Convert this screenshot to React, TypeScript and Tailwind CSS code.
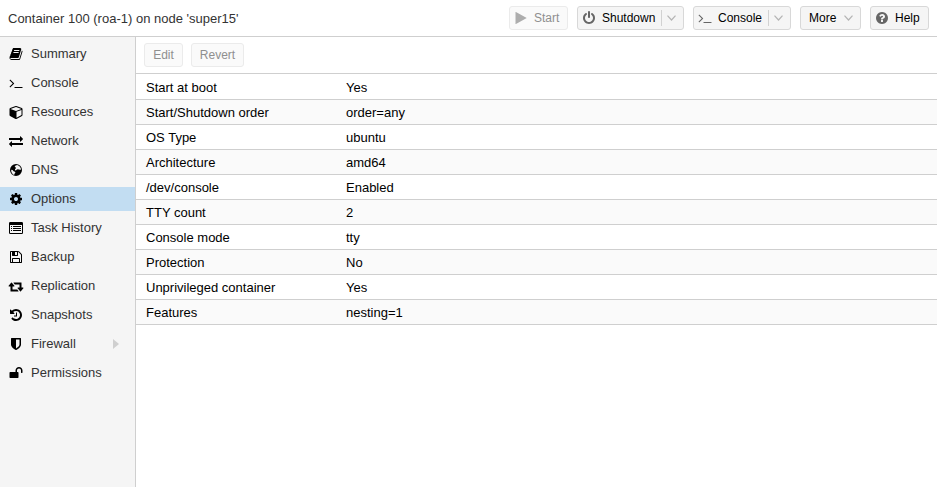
import React from "react";

const paths = {
  book: "M1703 478q40 57 18 129l-275 906q-19 64-76.5 107.5t-122.5 43.5h-923q-77 0-148.5-53.5t-99.5-131.5q-24-67-2-127 0-4 3-27t4-37q1-8-3-21.5t-3-19.5q2-11 8-21t16.5-23.5 16.5-23.5q23-38 45-91.5t30-91.5q3-10 .5-30t-.5-28q3-11 17-28t17-23q21-36 42-92t25-90q1-9-2.5-32t.5-28q4-13 22-30.5t22-22.5q19-26 42.5-84.5t27.5-96.5q1-8-3-25.5t-2-26.5q2-8 9-18t18-23 17-21q8-12 16.5-30.5t15-35 16-36 19.5-32 26.5-23.5 36-11.5 47.5 5.5l-1 3q38-9 51-9h761q74 0 114 56t18 130l-274 906q-36 119-71.5 153.5t-128.5 34.5h-869q-27 0-38 15-11 16-1 43 24 70 144 70h923q29 0 56-15.5t35-41.5l300-987q7-22 5-57 38 15 59 43zm-1064 2q-4 13 2 22.5t20 9.5h608q13 0 25.5-9.5t16.5-22.5l21-64q4-13-2-22.5t-20-9.5h-608q-13 0-25.5 9.5t-16.5 22.5zm-83 256q-4 13 2 22.5t20 9.5h608q13 0 25.5-9.5t16.5-22.5l21-64q4-13-2-22.5t-20-9.5h-608q-13 0-25.5 9.5t-16.5 22.5z",
  terminal: "M649 983l-466 466q-10 10-23 10t-23-10l-50-50q-10-10-10-23t10-23l393-393-393-393q-10-10-10-23t10-23l50-50q10-10 23-10t23 10l466 466q10 10 10 23t-10 23zm1079 457v64q0 14-9 23t-23 9h-960q-14 0-23-9t-9-23v-64q0-14 9-23t23-9h960q14 0 23 9t9 23z",
  cube: "M896 1629l640-349v-636l-640 233v752zm-64-865l698-254-698-254-698 254zm832-252v768q0 35-18 65t-49 47l-704 384q-28 16-61 16t-61-16l-704-384q-31-17-49-47t-18-65v-768q0-40 23-73t61-47l704-256q22-8 44-8t44 8l704 256q38 14 61 47t23 73z",
  exchange: "M1792 1184v192q0 13-9.5 22.5t-22.5 9.5h-1376v192q0 13-9.5 22.5t-22.5 9.5q-12 0-24-10l-319-320q-9-9-9-22 0-14 9-23l320-320q9-9 23-9 13 0 22.5 9.5t9.5 22.5v192h1376q13 0 22.5 9.5t9.5 22.5zm0-544q0 14-9 23l-320 320q-9 9-23 9-13 0-22.5-9.5t-9.5-22.5v-192h-1376q-13 0-22.5-9.5t-9.5-22.5v-192q0-13 9.5-22.5t22.5-9.5h1376v-192q0-14 9-23t23-9q12 0 24 10l319 319q9 9 9 23z",
  globe: "M896 128a768 768 0 1 0 0 1536a768 768 0 1 0 0-1536zM850 330l200-70 260 130 190 250 30 260-120-80-110 40-130-70-160 50-130 130-90-50-30-130 130-110-70-160-110-70zM290 850l170 60 120 130 180 70 60 130-120 120-40 180-130-60-160-200-90-220z",
  cog: "M1152 896q0-106-75-181t-181-75-181 75-75 181 75 181 181 75 181-75 75-181zm512-109v222q0 12-8 23t-20 13l-185 28q-19 54-39 91 35 50 107 138 10 12 10 25t-9 23q-27 37-99 108t-94 71q-12 0-26-9l-138-108q-44 23-91 38-16 136-29 186-7 28-36 28h-222q-14 0-24.5-8.5t-11.5-21.5l-28-184q-49-16-90-37l-141 107q-10 9-25 9-14 0-25-11-126-114-165-168-7-10-7-23 0-12 8-23 15-21 51-66.5t54-70.5q-27-50-41-99l-183-27q-13-2-21-12.5t-8-23.5v-222q0-12 8-23t19-13l186-28q14-46 39-92-40-57-107-138-10-12-10-24 0-10 9-23 26-36 98.5-107.5t94.5-71.5q13 0 26 10l138 107q44-23 91-38 16-136 29-186 7-28 36-28h222q14 0 24.5 8.5t11.5 21.5l28 184q49 16 90 37l142-107q9-9 24-9 13 0 25 10 129 119 165 170 7 8 7 22 0 12-8 23-15 21-51 66.5t-54 70.5q26 50 41 98l183 28q13 2 21 12.5t8 23.5z",
  list: "M160 128h1472q160 0 160 160v1216q0 160-160 160h-1472q-160 0-160-160v-1216q0-160 160-160zM128 512v992q0 32 32 32h1472q32 0 32-32v-992zM256 640h128v128h-128zM512 640h1024v128h-1024zM256 896h128v128h-128zM512 896h1024v128h-1024zM256 1152h128v128h-128zM512 1152h1024v128h-1024z",
  floppy: "M512 1536h768v-384h-768v384zm896 0h128v-896q0-14-10-38.5t-20-34.5l-281-281q-10-10-34-20t-39-10v416q0 40-28 68t-68 28h-576q-40 0-68-28t-28-68v-416h-128v1280h128v-416q0-40 28-68t68-28h832q40 0 68 28t28 68v416zm-384-928v-320q0-13-9.5-22.5t-22.5-9.5h-192q-13 0-22.5 9.5t-9.5 22.5v320q0 13 9.5 22.5t22.5 9.5h192q13 0 22.5-9.5t9.5-22.5zm640 32v928q0 40-28 68t-68 28h-1344q-40 0-68-28t-28-68v-1344q0-40 28-68t68-28h928q40 0 88 20t76 48l280 280q28 28 48 76t20 88z",
  retweet: "M1216 1568q0 13-9.5 22.5t-22.5 9.5h-960q-8 0-13.5-2t-9-7-5.5-8-3-11.5-1-11.5v-600h-192q-26 0-45-19t-19-45q0-24 15-41l320-384q19-22 49-22t49 22l320 384q15 17 15 41 0 26-19 45t-45 19h-192v384h576q16 0 25 11l160 192q7 10 7 21zm640-416q0 24-15 41l-320 384q-20 23-49 23t-49-23l-320-384q-15-17-15-41 0-26 19-45t45-19h192v-384h-576q-16 0-25-12l-160-192q-7-9-7-20 0-13 9.5-22.5t22.5-9.5h960q8 0 13.5 2t9 7 5.5 8 3 11.5 1 11.5v600h192q26 0 45 19t19 45z",
  history: "M1664 896q0 156-61 298t-164 245-245 164-298 61q-172 0-327-72.5t-264-204.5q-7-10-6.5-22.5t8.5-20.5l137-138q10-9 25-9 16 2 23 12 73 95 179 147t225 52q104 0 198.5-40.5t163.5-109.5 109.5-163.5 40.5-198.5-40.5-198.5-109.5-163.5-163.5-109.5-198.5-40.5q-98 0-188 35.5t-160 101.5l137 138q31 30 14 69-17 40-59 40h-448q-26 0-45-19t-19-45v-448q0-42 40-59 39-17 69 14l130 129q107-101 244.5-156.5t284.5-55.5q156 0 298 61t245 164 164 245 61 298zm-640-288v448q0 14-9 23t-23 9h-320q-14 0-23-9t-9-23v-64q0-14 9-23t23-9h224v-352q0-14 9-23t23-9h64q14 0 23 9t9 23z",
  shield: "M1344 960v-640h-448v1137q119-63 213-137 235-184 235-360zm192-768v768q0 86-33.5 170.5t-83 150-118 127.5-126.5 103-121 77.5-89.5 49.5-42.5 20q-12 6-26 6t-26-6q-16-7-42.5-20t-89.5-49.5-121-77.5-126.5-103-118-127.5-83-150-33.5-170.5v-768q0-26 19-45t45-19h1152q26 0 45 19t19 45z",
  unlock: "M1728 576v256q0 26-19 45t-45 19h-64q-26 0-45-19t-19-45v-256q0-106-75-181t-181-75-181 75-75 181v192h96q40 0 68 28t28 68v576q0 40-28 68t-68 28h-960q-40 0-68-28t-28-68v-576q0-40 28-68t68-28h672v-192q0-185 131.5-316.5t316.5-131.5 316.5 131.5 131.5 316.5z",
  power: "M1664 896q0 156-61 298t-164 245-245 164-298 61-298-61-245-164-164-245-61-298q0-182 80.5-343t226.5-270q43-32 95.5-25t83.5 50q32 42 24.5 94.5t-49.5 84.5q-98 74-151.5 181t-53.5 228q0 104 40.5 198.5t109.5 163.5 163.5 109.5 198.5 40.5 198.5-40.5 163.5-109.5 109.5-163.5 40.5-198.5q0-121-53.5-228t-151.5-181q-42-32-49.5-84.5t24.5-94.5q31-43 84-50t95 25q146 109 226.5 270t80.5 343zm-640-768v640q0 52-38 90t-90 38-90-38-38-90v-640q0-52 38-90t90-38 90 38 38 90z",
  question: "M1024 1376v-192q0-14-9-23t-23-9h-192q-14 0-23 9t-9 23v192q0 14 9 23t23 9h192q14 0 23-9t9-23zm256-672q0-88-55.5-163t-138.5-116-170-41q-243 0-371 213-15 24 8 42l132 100q7 6 19 6 16 0 25-12 53-68 86-92 34-24 86-24 48 0 85.5 26t37.5 59q0 38-20 61t-68 45q-63 28-115.5 86.5t-52.5 125.5v36q0 14 9 23t23 9h192q14 0 23-9t9-23q0-19 21.5-49.5t54.5-49.5q32-18 49-28.5t46-35 44.5-48 28-60.5 12.5-81zm384 192q0 209-103 385.5t-279.5 279.5-385.5 103-385.5-103-279.5-279.5-103-385.5 103-385.5 279.5-279.5 385.5-103 385.5 103 279.5 279.5 103 385.5z",
  play: "M1576 927l-1328 738q-23 13-39.5 3t-16.5-36v-1472q0-26 16.5-36t39.5 3l1328 738q23 13 23 31t-23 31z",
};

type IconName = keyof typeof paths;

function Icon({ name, className = "" }: { name: IconName; className?: string }) {
  return (
    <svg
      viewBox={name === "cube" ? "-64 0 1792 1792" : "0 0 1792 1792"}
      fill="currentColor"
      fillRule="evenodd"
      overflow="visible"
      className={`size-3.5 shrink-0 ${className}`}
    >
      <path d={paths[name]} />
    </svg>
  );
}

function Chevron({ className = "" }: { className?: string }) {
  return (
    <svg viewBox="0 0 9 6" fill="none" stroke="#b4b4b4" strokeWidth="1.2" className={`h-1.5 w-[9px] shrink-0 ${className}`}>
      <path d="M.5.7 4.5 5 8.5.7" />
    </svg>
  );
}

const navItems: { icon: IconName; label: string; expandable?: boolean }[] = [
  { icon: "book", label: "Summary" },
  { icon: "terminal", label: "Console" },
  { icon: "cube", label: "Resources" },
  { icon: "exchange", label: "Network" },
  { icon: "globe", label: "DNS" },
  { icon: "cog", label: "Options" },
  { icon: "list", label: "Task History" },
  { icon: "floppy", label: "Backup" },
  { icon: "retweet", label: "Replication" },
  { icon: "history", label: "Snapshots" },
  { icon: "shield", label: "Firewall", expandable: true },
  { icon: "unlock", label: "Permissions" },
];

const options = [
  ["Start at boot", "Yes"],
  ["Start/Shutdown order", "order=any"],
  ["OS Type", "ubuntu"],
  ["Architecture", "amd64"],
  ["/dev/console", "Enabled"],
  ["TTY count", "2"],
  ["Console mode", "tty"],
  ["Protection", "No"],
  ["Unprivileged container", "Yes"],
  ["Features", "nesting=1"],
];

const button = "flex h-6 shrink-0 items-center rounded-[3px] border border-[#d8d8d8] bg-[#f5f5f5] text-[12px] text-black";
const disabled = "flex h-6 shrink-0 items-center rounded-[3px] border border-[#ebebeb] bg-[#fafafa] text-[12px] text-[#8f8f8f]";

export default function App() {
  return (
    <div className="flex h-screen w-full flex-col overflow-hidden bg-white font-['Liberation_Sans',Arial,sans-serif] text-[13px] leading-4 text-black">
      <header className="flex h-[37px] shrink-0 items-center gap-[9px] border-b border-[#cfcfcf] pr-2 pl-2">
        <h1 className="mr-auto whitespace-nowrap pt-px text-[#333]">Container 100 (roa-1) on node 'super15'</h1>
        <button className={`${disabled} w-[59px] pl-1`}>
          <Icon name="play" className="text-[#adadad]" />
          <span className="ml-1.5">Start</span>
        </button>
        <button className={`${button} w-[107px] pl-1`}>
          <Icon name="power" className="text-[#666]" />
          <span className="ml-1.5">Shutdown</span>
          <span className="ml-auto h-4 w-px bg-[#d2d2d2]" />
          <Chevron className="mr-[7px] ml-[5px]" />
        </button>
        <button className={`${button} w-[98px] pl-1`}>
          <Icon name="terminal" className="text-[#666]" />
          <span className="ml-1.5">Console</span>
          <span className="ml-auto h-4 w-px bg-[#d2d2d2]" />
          <Chevron className="mr-[7px] ml-[5px]" />
        </button>
        <button className={`${button} w-[61px] pl-2`}>
          <span>More</span>
          <Chevron className="mr-[7px] ml-auto" />
        </button>
        <button className={`${button} w-[59px] pl-1`}>
          <Icon name="question" className="text-[#666]" />
          <span className="ml-1.5">Help</span>
        </button>
      </header>
      <div className="flex min-h-0 flex-1">
        <nav className="flex w-[136px] shrink-0 flex-col gap-[5px] border-r border-[#cfcfcf] bg-[#f5f5f5] pt-[5px]">
          {navItems.map((item) => (
            <a key={item.label} className={`flex h-6 items-center pl-[9px] text-[#333] ${item.label === "Options" ? "bg-[#c2ddf2]" : ""}`}>
              <Icon name={item.icon} className="text-black" />
              <span className="ml-2 whitespace-nowrap">{item.label}</span>
              {item.expandable && (
                <svg viewBox="0 0 6 10" className="mr-4 ml-auto h-2.5 w-1.5" fill="#cfcfcf">
                  <path d="M0 0 6 5 0 10z" />
                </svg>
              )}
            </a>
          ))}
        </nav>
        <main className="flex min-w-0 flex-1 flex-col">
          <div className="flex h-[37px] shrink-0 items-center gap-2 border-b border-[#cfcfcf] px-2">
            <button className={`${disabled} w-[39px] justify-center`}>Edit</button>
            <button className={`${disabled} w-[53px] justify-center`}>Revert</button>
          </div>
          <div className="pt-px">
            {options.map(([name, value]) => (
              <div key={name} className="flex h-[25px] items-center border-b border-[#cfcfcf] pt-0.5 even:bg-[#fafafa]">
                <div className="w-[200px] shrink-0 pl-2.5">{name}</div>
                <div className="pl-2.5">{value}</div>
              </div>
            ))}
          </div>
        </main>
      </div>
    </div>
  );
}
